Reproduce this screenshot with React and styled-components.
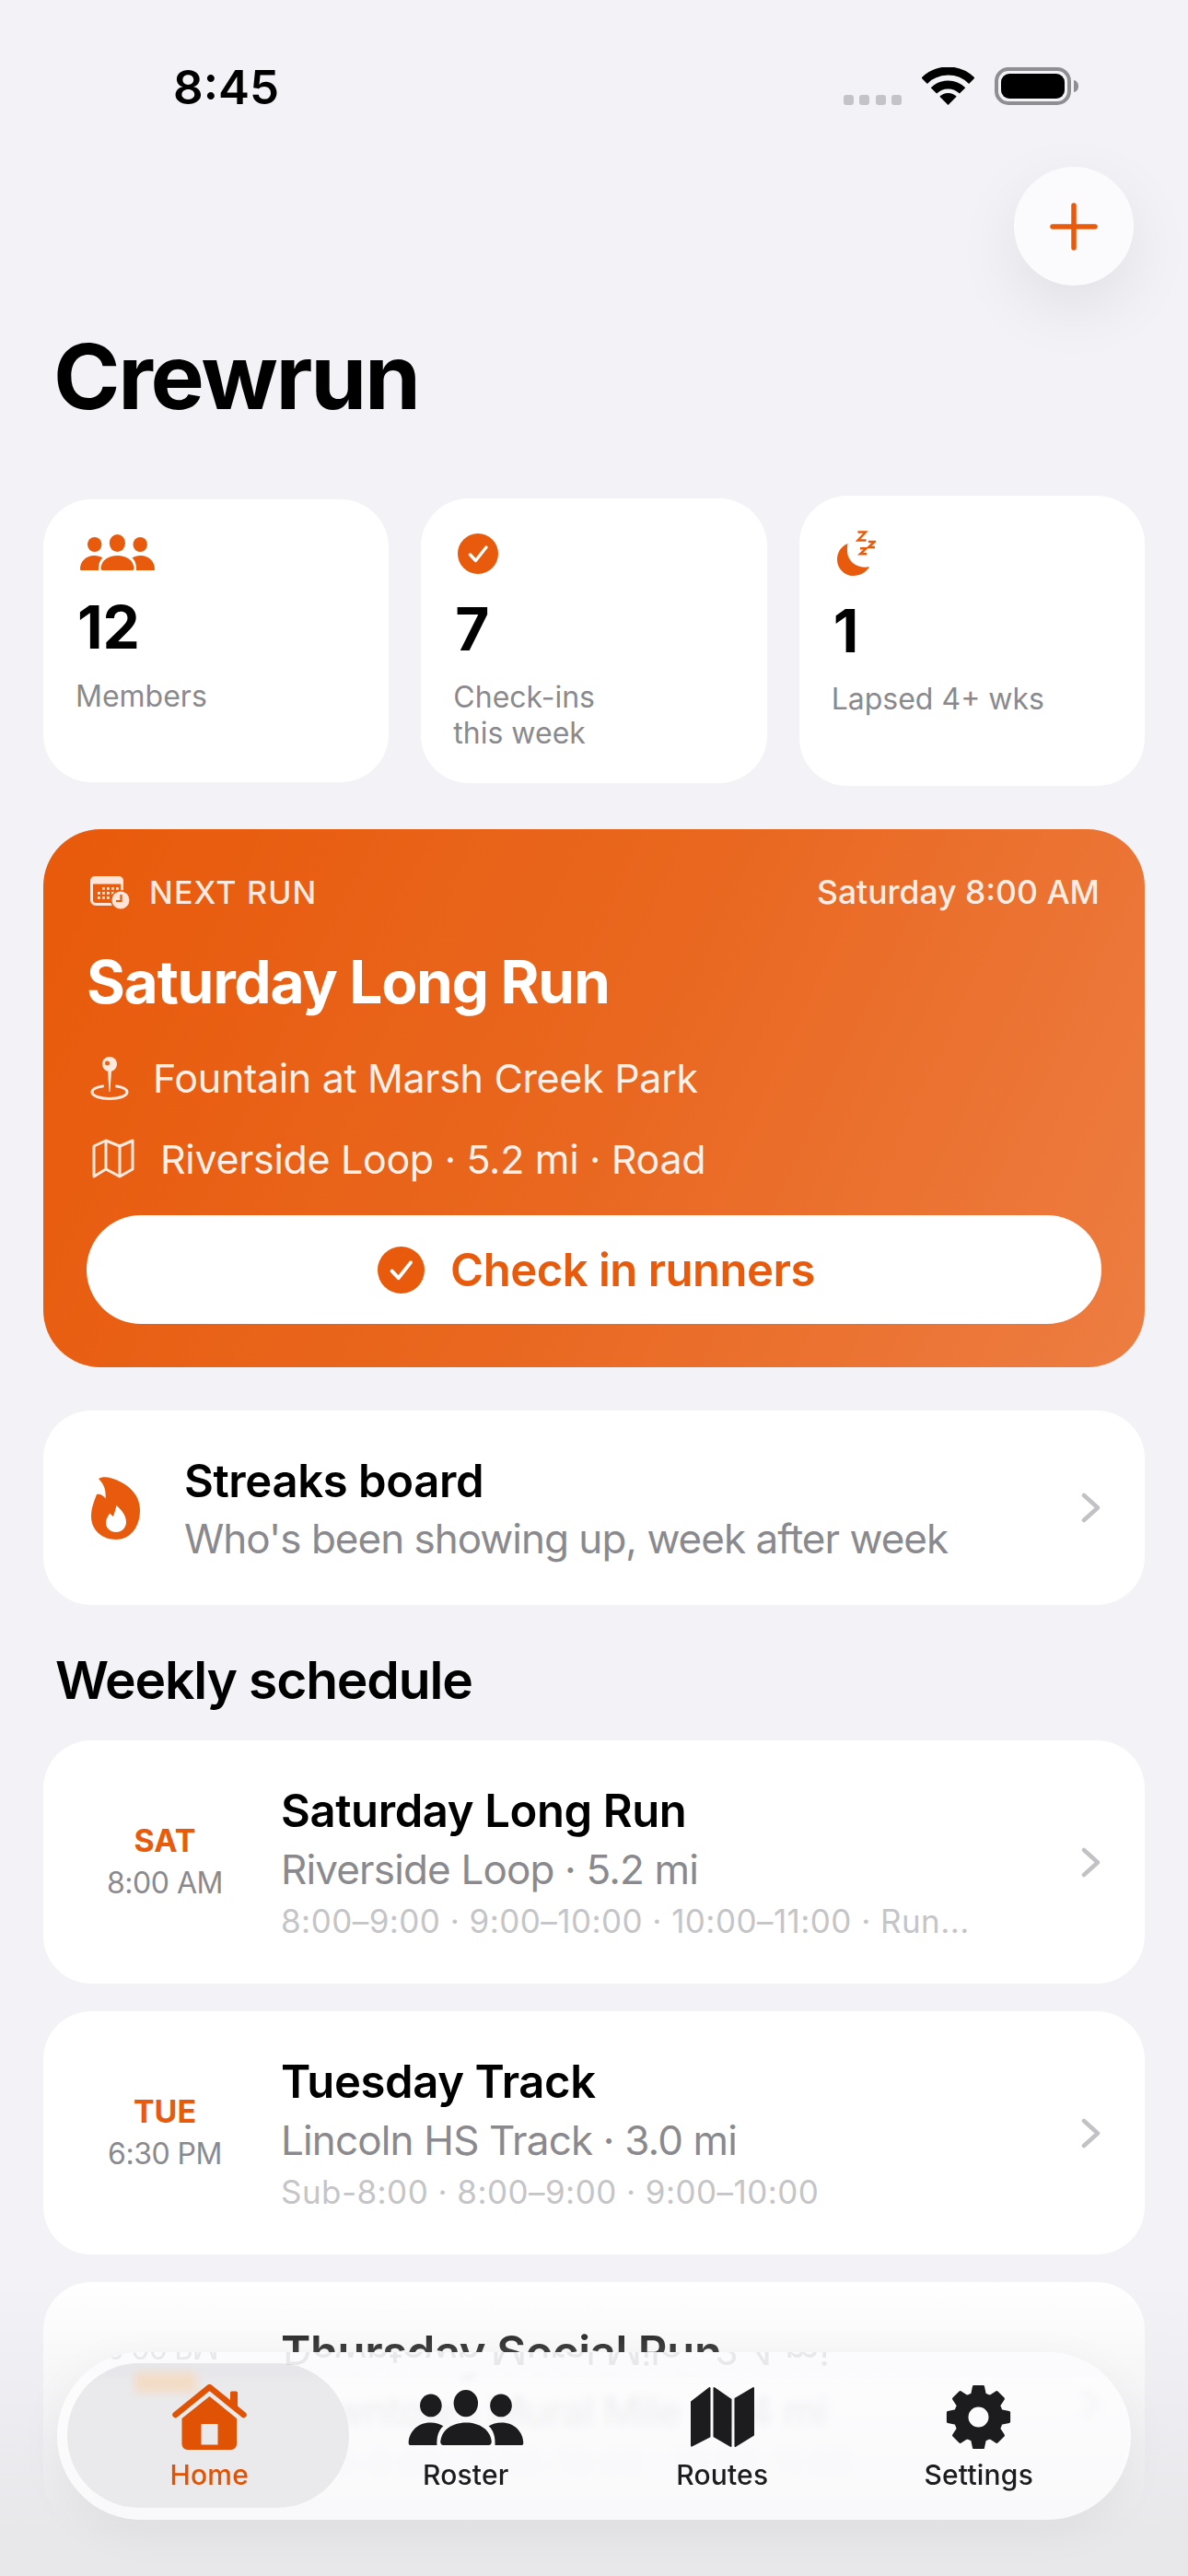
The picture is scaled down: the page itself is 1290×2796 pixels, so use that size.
import React from "react";
import styled, { createGlobalStyle } from "styled-components";

const ORANGE = "#e85b0c";

const GlobalStyle = createGlobalStyle`
  html, body {
    margin: 0;
    padding: 0;
    background: #f2f2f7;
  }
  * {
    box-sizing: border-box;
  }
`;

const Screen = styled.div`
  position: relative;
  width: 1290px;
  height: 2796px;
  overflow: hidden;
  background: #f2f2f7;
  font-family: Inter, "Liberation Sans", sans-serif;
  color: #000;
`;

const StatusBar = styled.div`
  display: flex;
  justify-content: space-between;
  padding: 65px 119px 0 188px;
`;

const Time = styled.div`
  font-size: 51px;
  line-height: 60px;
  font-weight: 600;
`;

const StatusIcons = styled.div`
  display: flex;
  align-items: flex-end;
  align-self: flex-start;
  height: 41px;
  margin-top: 8px;
  gap: 22px;
`;

const SignalDots = styled.div`
  display: flex;
  gap: 6.5px;
`;

const SignalDot = styled.div`
  width: 11px;
  height: 11px;
  border-radius: 3px;
  background: #c4c4c8;
`;

const AddRow = styled.div`
  display: flex;
  justify-content: flex-end;
  padding-right: 59px;
  margin-top: 56px;
`;

const AddButton = styled.div`
  width: 130px;
  height: 129px;
  border-radius: 50%;
  background: #fbfbfd;
  display: flex;
  align-items: center;
  justify-content: center;
  box-shadow: 0 24px 70px rgba(0, 0, 0, 0.08);
`;

const PageTitle = styled.h1`
  margin: 49px 0 0;
  padding-left: 58px;
  font-size: 98px;
  line-height: 100px;
  font-weight: 700;
  letter-spacing: -2.2px;
`;

const Content = styled.div`
  padding: 0 47px;
`;

const StatRow = styled.div`
  display: flex;
  align-items: center;
  gap: 35px;
  margin-top: 79px;
`;

const StatCard = styled.div`
  flex: 1;
  height: ${({ $height }) => $height}px;
  padding: 38px 35px 0;
  background: #fff;
  border-radius: 52px;
`;

const StatIcon = styled.div`
  display: flex;
  min-height: 41px;
  padding-left: 5px;
`;

const StatNumber = styled.div`
  margin-top: 28px;
  padding-left: 2px;
  font-size: 64px;
  line-height: 64px;
  font-weight: 700;
`;

const StatLabel = styled.div`
  margin-top: ${({ $gap }) => $gap}px;
  font-size: 32px;
  line-height: 38.5px;
  color: #8a8a8e;
`;

const Hero = styled.div`
  margin-top: 47px;
  padding: 46px 47px 47px;
  border-radius: 62px;
  color: #fff;
  background: linear-gradient(115deg, #e85a0b 0%, #e9671f 50%, #ed7d42 100%);
`;

const HeroHead = styled.div`
  display: flex;
  align-items: center;
  justify-content: space-between;
  height: 44px;
  padding: 0 2px 0 4px;
`;

const HeroTag = styled.div`
  display: flex;
  align-items: center;
  gap: 20px;
  font-size: 34px;
  font-weight: 500;
  letter-spacing: 1.2px;
  color: rgba(255, 255, 255, 0.88);
`;

const HeroWhen = styled.div`
  font-size: 35.5px;
  font-weight: 500;
  color: rgba(255, 255, 255, 0.9);
`;

const HeroTitle = styled.div`
  margin-top: 38px;
  font-size: 64px;
  line-height: 76px;
  font-weight: 700;
  letter-spacing: -1.3px;
`;

const HeroLine = styled.div`
  display: flex;
  align-items: center;
  gap: 26px;
  height: 52px;
  margin-top: ${({ $top }) => $top}px;
  padding-left: 4px;
  font-size: 43px;
  letter-spacing: -0.33px;
  color: rgba(255, 255, 255, 0.92);
`;

const CheckInButton = styled.div`
  display: flex;
  align-items: center;
  justify-content: center;
  gap: 28px;
  height: 118px;
  margin-top: 35px;
  padding-left: 5px;
  border-radius: 59px;
  background: #fff;
  color: ${ORANGE};
  font-size: 49px;
  font-weight: 600;
  letter-spacing: -0.5px;
`;

const StreaksCard = styled.div`
  display: flex;
  align-items: center;
  height: 211px;
  margin-top: 47px;
  padding: 0 48px 0 52px;
  gap: 47px;
  background: #fff;
  border-radius: 52px;
`;

const RowText = styled.div`
  flex: 1;
  min-width: 0;
`;

const StreaksTitle = styled.div`
  margin-top: 4px;
  font-size: 49px;
  line-height: 62px;
  font-weight: 600;
  letter-spacing: -0.4px;
`;

const StreaksSub = styled.div`
  font-size: 44px;
  line-height: 62px;
  letter-spacing: -1px;
  color: #8a8a8e;
`;

const SectionTitle = styled.h2`
  margin: 47px 0 30px;
  padding-left: 13px;
  font-size: 57px;
  line-height: 70px;
  font-weight: 600;
  letter-spacing: -1.2px;
`;

const ScheduleList = styled.div`
  display: flex;
  flex-direction: column;
  gap: 30px;
`;

const ScheduleRow = styled.div`
  display: flex;
  align-items: center;
  flex: none;
  height: 264px;
  padding: 0 48px 0 46px;
  background: #fff;
  border-radius: 52px;
`;

const DayColumn = styled.div`
  width: 172px;
  margin-right: 40px;
  text-align: center;
`;

const DayName = styled.div`
  font-size: 34px;
  line-height: 46px;
  font-weight: 700;
  color: ${ORANGE};
`;

const DayTime = styled.div`
  font-size: 32px;
  line-height: 46px;
  letter-spacing: -0.5px;
  color: #8a8a8e;
`;

const RunName = styled.div`
  margin-top: 2px;
  font-size: 49px;
  line-height: 60px;
  font-weight: 600;
  letter-spacing: -0.4px;
`;

const RunPlace = styled.div`
  margin-top: 3px;
  font-size: 44px;
  line-height: 60px;
  letter-spacing: -0.85px;
  color: #8a8a8e;
`;

const RunPaces = styled.div`
  margin-top: 3px;
  font-size: 35px;
  line-height: 46px;
  letter-spacing: 0.45px;
  color: #c5c5c8;
`;

const BottomFade = styled.div`
  position: absolute;
  left: 0;
  right: 0;
  bottom: 0;
  height: 320px;
  pointer-events: none;
  background: linear-gradient(
    180deg,
    rgba(232, 232, 235, 0) 0%,
    rgba(232, 232, 235, 0.28) 24%,
    rgba(232, 232, 235, 0.5) 45%,
    rgba(232, 232, 235, 1) 85%
  );
`;

const TabBar = styled.div`
  position: absolute;
  left: 62px;
  right: 62px;
  bottom: 61px;
  height: 182px;
  padding: 35px 26px 0;
  display: grid;
  grid-template-columns: repeat(4, 1fr);
  overflow: hidden;
  border-radius: 91px;
  background: rgba(254, 254, 255, 0.76);
  backdrop-filter: blur(5px);
  box-shadow: 0 12px 50px rgba(0, 0, 0, 0.05);

  /* keeps the blurred title above from smearing into the top edge */
  &::before {
    content: "";
    position: absolute;
    left: 0;
    right: 0;
    top: 0;
    height: 36px;
    background: linear-gradient(180deg, #fbfbfd 55%, rgba(251, 251, 253, 0) 100%);
  }
`;

const ActivePill = styled.div`
  position: absolute;
  left: 11px;
  top: 12px;
  width: 306px;
  height: 157px;
  border-radius: 78px;
  background: #ebebed;
  mix-blend-mode: multiply;
`;

const PillGlow = styled.div`
  position: absolute;
  left: 84px;
  top: 22px;
  width: 68px;
  height: 22px;
  background: #f3dcc6;
  filter: blur(5px);
`;

const Reflection = styled.div`
  position: absolute;
  left: ${({ $left }) => $left}px;
  top: ${({ $top }) => $top}px;
  font-size: ${({ $size }) => $size}px;
  line-height: 44px;
  letter-spacing: -0.85px;
  white-space: nowrap;
  color: #8a8a8e;
  opacity: 0.16;
  transform: scaleY(-1);
  filter: blur(0.6px);
`;

const TabItem = styled.div`
  position: relative;
  display: flex;
  flex-direction: column;
  align-items: center;
  color: ${({ $active }) => ($active ? "#e05204" : "#1c1c1e")};
`;

const TabIcon = styled.div`
  display: flex;
  align-items: center;
  justify-content: center;
  height: 71px;
`;

const TabLabel = styled.div`
  margin-top: 7px;
  font-size: 30px;
  line-height: 40px;
  font-weight: 500;
  letter-spacing: 0.2px;
`;

const StatGroupIcon = styled.span`
  display: flex;
  color: ${ORANGE};
`;

const GROUP_LEFT =
  "M1.5 39H20C19.8 33 21 28.5 24.5 25.5C22 24 19 23 15.5 23C6 23 0 30 0 37.5C0 38.5 .5 39 1.5 39Z";
const GROUP_MID =
  "M24.5 39C23 39 22.3 38 22.5 36C23.5 28 31 23 40.5 23C50 23 57.5 28 58.5 36C58.7 38 58 39 56.5 39Z";

const GroupIcon = ({ width, height }) => (
  <svg width={width} height={height} viewBox="0 0 81 39" fill="currentColor">
    <ellipse cx="15.7" cy="11" rx="7.7" ry="8" />
    <ellipse cx="40.4" cy="9.5" rx="8.6" ry="9.5" />
    <ellipse cx="65.2" cy="11" rx="7.7" ry="8" />
    <path d={GROUP_LEFT} />
    <path d={GROUP_MID} />
    <path d={GROUP_LEFT} transform="matrix(-1 0 0 1 81 0)" />
  </svg>
);

const CheckCircle = ({ size }) => (
  <svg width={size} height={size} viewBox="0 0 44 44">
    <circle cx="22" cy="22" r="22" fill={ORANGE} />
    <path d="M13.5 23L19.5 29.5L31 15" fill="none" stroke="#fff" strokeWidth="3.4" strokeLinecap="round" strokeLinejoin="round" />
  </svg>
);

const MoonIcon = () => (
  <svg width="43" height="49" viewBox="0 0 43 49" fill="none">
    <path
      d="M12.5 14C5 17 1 24 1 31.5C1 41 9 49 18 49C26 49 33 45 36 39C24 42 12 34 12 22C12 19 12 16.5 12.5 14Z"
      fill={ORANGE}
    />
    <g stroke={ORANGE} strokeWidth="2.4">
      <path d="M23.5 1.5H32L23.5 10.5H32.5" />
      <path d="M35 12H41.8L35 18H42" />
      <path d="M26 19.3H32.5L26 25.3H33" />
    </g>
  </svg>
);

const CalendarClockIcon = () => (
  <svg width="44" height="37" viewBox="0 0 44 37" fill="none">
    <rect x="1.5" y="2.5" width="33" height="29" rx="4.5" stroke="#fde6d9" strokeWidth="3" />
    <path d="M5 1H31A5 5 0 0 1 36 6V9.5H0V6A5 5 0 0 1 5 1Z" fill="#fde6d9" />
    <g fill="#fde6d9">
      {[
        [13, 13], [18, 13], [23, 13], [28, 13],
        [8, 18], [13, 18], [18, 18], [23, 18],
        [8, 23], [13, 23], [18, 23],
      ].map(([x, y]) => (
        <rect key={`${x}-${y}`} x={x} y={y} width="2.8" height="2.8" />
      ))}
    </g>
    <circle cx="33" cy="27" r="11" fill="#e85a0b" />
    <circle cx="33" cy="27" r="9.5" fill="#fde6d9" />
    <path d="M33.5 21V28H28" stroke="#e85a0b" strokeWidth="2.2" fill="none" />
  </svg>
);

const PinIcon = () => (
  <svg width="42" height="47" viewBox="0 0 42 47" fill="none">
    <path d="M13.5 32C6.5 33 2 35.5 2 38.5C2 42.5 10.5 45.5 21 45.5C31.5 45.5 40 42.5 40 38.5C40 35.5 35.5 33 28.5 32" stroke="#fdeade" strokeWidth="3" strokeLinecap="round" />
    <path d="M19 15H23L21.5 38H20.5Z" fill="#fdeade" />
    <circle cx="21" cy="8" r="8" fill="#fdeade" />
    <circle cx="18.5" cy="7" r="2.5" fill="#e9621a" />
  </svg>
);

const MapOutlineIcon = () => (
  <svg width="50" height="44" viewBox="0 0 50 44" fill="none" stroke="#fdeade" strokeWidth="3" strokeLinejoin="round">
    <path d="M4 8L17 2L32 8L46 2V33L32 41L17 33L4 41Z" />
    <path d="M17 2V33M32 8V41" />
  </svg>
);

const FlameIcon = () => (
  <svg width="54" height="68" viewBox="0 0 54 68">
    <path
      fill={ORANGE}
      fillRule="evenodd"
      d="M8 2C12 -.5 17 0 22 1.5C40 7 53 19 53 36C53 55 42 68 27 68C11 68 0 57 0 43C0 34 3 27 6 19C8 18 13 19 15.5 23.5C16.5 15 14 8 8 2ZM27.5 31C33 36 38 42 38 49C38 55.5 33 60 27 60C20.5 60 16 55.5 16 50C16 46 18 42.5 20.5 39.5C21.5 41 22.5 42 24 43C25.5 39 26.5 35 27.5 31Z"
    />
  </svg>
);

const Chevron = () => (
  <svg width="21" height="33" viewBox="0 0 21 33" fill="none">
    <path d="M3 3L18 16.5L3 30" stroke="#c2c2c6" strokeWidth="4.5" strokeLinecap="round" strokeLinejoin="round" />
  </svg>
);

const PlusIcon = () => (
  <svg width="52" height="52" viewBox="0 0 52 52" fill="none">
    <path d="M26 3V49M3 26H49" stroke={ORANGE} strokeWidth="5.5" strokeLinecap="round" />
  </svg>
);

const WifiIcon = () => (
  <svg width="57" height="41" viewBox="0 0 57 41" fill="none">
    <path d="M2.7 14.7A36.5 36.5 0 0 1 54.3 14.7" stroke="#000" strokeWidth="9" />
    <path d="M12.9 25.4A22 22 0 0 1 44.1 25.4" stroke="#000" strokeWidth="9" />
    <path d="M28.5 41L19.3 31.8A13 13 0 0 1 37.7 31.8Z" fill="#000" />
  </svg>
);

const BatteryIcon = () => (
  <svg width="91" height="41" viewBox="0 0 91 41" fill="none">
    <rect x="2" y="2" width="79" height="37" rx="13" stroke="#8e8e93" strokeWidth="4" />
    <rect x="7" y="7" width="69" height="27" rx="9" fill="#000" />
    <path d="M86 14C89 14.5 91 17 91 20.5C91 24 89 26.5 86 27Z" fill="#8e8e93" />
  </svg>
);

const HomeIcon = () => (
  <svg width="81" height="71" viewBox="0 0 81 71" fill="none">
    <path d="M3.5 33L40.5 3L77.5 33" stroke="currentColor" strokeWidth="6.5" strokeLinecap="round" strokeLinejoin="round" />
    <path d="M63 20V9A1.5 1.5 0 0 1 64.5 7.5H69.5A1.5 1.5 0 0 1 71 9V27Z" fill="currentColor" />
    <path
      fillRule="evenodd"
      fill="currentColor"
      d="M10.5 37L40.5 13L70 37V65A6 6 0 0 1 64 71H16.5A6 6 0 0 1 10.5 65ZM31.5 43V65.5H49.5V43Z"
    />
  </svg>
);

const RoutesIcon = () => (
  <svg width="69" height="65" viewBox="0 0 69 65" fill="currentColor" stroke="currentColor" strokeWidth="2" strokeLinejoin="round">
    <path d="M1 16L20.5 1V53.5L1 63.5Z" />
    <path d="M25.5 1L43.5 13.5V64L25.5 53.5Z" />
    <path d="M48.5 12.5L68 1V52L48.5 64Z" />
  </svg>
);

// outline of a toothed wheel, teeth start from the top
const gearPath = (c, outer, inner, teeth) => {
  const pts = [];
  const step = (Math.PI * 2) / teeth;
  for (let i = 0; i < teeth; i++) {
    const a = i * step - Math.PI / 2;
    [
      [inner, -0.27],
      [outer, -0.15],
      [outer, 0.15],
      [inner, 0.27],
    ].forEach(([r, d]) => {
      pts.push(`${(c + r * Math.cos(a + d)).toFixed(2)} ${(c + r * Math.sin(a + d)).toFixed(2)}`);
    });
  }
  return `M${pts.join("L")}Z`;
};

const GearIcon = () => (
  <svg width="71" height="71" viewBox="0 0 71 71" fill="currentColor">
    <path
      fillRule="evenodd"
      stroke="currentColor"
      strokeWidth="3"
      strokeLinejoin="round"
      d={`${gearPath(35.5, 33.5, 25.5, 8)}M35.5 23A12.5 12.5 0 1 0 35.5 48A12.5 12.5 0 1 0 35.5 23Z`}
    />
  </svg>
);

const stats = [
  { value: "12", label: ["Members"], height: 307, gap: 24, icon: <StatGroupIcon><GroupIcon width={81} height={39} /></StatGroupIcon> },
  { value: "7", label: ["Check-ins", "this week"], height: 309, gap: 23, icon: <CheckCircle size={44} /> },
  { value: "1", label: ["Lapsed 4+ wks"], height: 315, gap: 23, icon: <MoonIcon /> },
];

const schedule = [
  { day: "SAT", time: "8:00 AM", name: "Saturday Long Run", place: "Riverside Loop · 5.2 mi", paces: "8:00–9:00 · 9:00–10:00 · 10:00–11:00 · Run..." },
  { day: "TUE", time: "6:30 PM", name: "Tuesday Track", place: "Lincoln HS Track · 3.0 mi", paces: "Sub-8:00 · 8:00–9:00 · 9:00–10:00" },
  { day: "THU", time: "6:00 PM", name: "Thursday Social Run", place: "Downtown Mural Mile · 3.4 mi", paces: "8:00–9:00 · 9:00–10:00 · 10:00–11:00" },
];

const tabs = [
  { label: "Home", icon: <HomeIcon />, active: true },
  { label: "Roster", icon: <GroupIcon width={126} height={60} /> },
  { label: "Routes", icon: <RoutesIcon /> },
  { label: "Settings", icon: <GearIcon /> },
];

const App = () => {
  return (
    <Screen>
      <GlobalStyle />
      <StatusBar>
        <Time>8:45</Time>
        <StatusIcons>
          <SignalDots>
            {[0, 1, 2, 3].map((i) => (
              <SignalDot key={i} />
            ))}
          </SignalDots>
          <WifiIcon />
          <BatteryIcon />
        </StatusIcons>
      </StatusBar>

      <AddRow>
        <AddButton>
          <PlusIcon />
        </AddButton>
      </AddRow>

      <PageTitle>Crewrun</PageTitle>

      <Content>
        <StatRow>
          {stats.map((stat) => (
            <StatCard key={stat.value} $height={stat.height}>
              <StatIcon>{stat.icon}</StatIcon>
              <StatNumber>{stat.value}</StatNumber>
              <StatLabel $gap={stat.gap}>
                {stat.label.map((line) => (
                  <div key={line}>{line}</div>
                ))}
              </StatLabel>
            </StatCard>
          ))}
        </StatRow>

        <Hero>
          <HeroHead>
            <HeroTag>
              <CalendarClockIcon />
              NEXT RUN
            </HeroTag>
            <HeroWhen>Saturday 8:00 AM</HeroWhen>
          </HeroHead>
          <HeroTitle>Saturday Long Run</HeroTitle>
          <HeroLine $top={40}>
            <PinIcon />
            Fountain at Marsh Creek Park
          </HeroLine>
          <HeroLine $top={36}>
            <MapOutlineIcon />
            Riverside Loop · 5.2 mi · Road
          </HeroLine>
          <CheckInButton>
            <CheckCircle size={51} />
            Check in runners
          </CheckInButton>
        </Hero>

        <StreaksCard>
          <FlameIcon />
          <RowText>
            <StreaksTitle>Streaks board</StreaksTitle>
            <StreaksSub>Who's been showing up, week after week</StreaksSub>
          </RowText>
          <Chevron />
        </StreaksCard>

        <SectionTitle>Weekly schedule</SectionTitle>

        <ScheduleList>
          {schedule.map((run) => (
            <ScheduleRow key={run.day}>
              <DayColumn>
                <DayName>{run.day}</DayName>
                <DayTime>{run.time}</DayTime>
              </DayColumn>
              <RowText>
                <RunName>{run.name}</RunName>
                <RunPlace>{run.place}</RunPlace>
                <RunPaces>{run.paces}</RunPaces>
              </RowText>
              <Chevron />
            </ScheduleRow>
          ))}
        </ScheduleList>
      </Content>

      <BottomFade />

      <TabBar>
        <ActivePill />
        <PillGlow />
        <Reflection aria-hidden="true" $left={245} $top={-24} $size={44}>
          Downtown Mural Mile · 3.4 mi
        </Reflection>
        <Reflection aria-hidden="true" $left={53} $top={-27} $size={32}>
          6:00 PM
        </Reflection>
        {tabs.map((tab) => (
          <TabItem key={tab.label} $active={tab.active}>
            <TabIcon>{tab.icon}</TabIcon>
            <TabLabel>{tab.label}</TabLabel>
          </TabItem>
        ))}
      </TabBar>
    </Screen>
  );
};

export default App;
